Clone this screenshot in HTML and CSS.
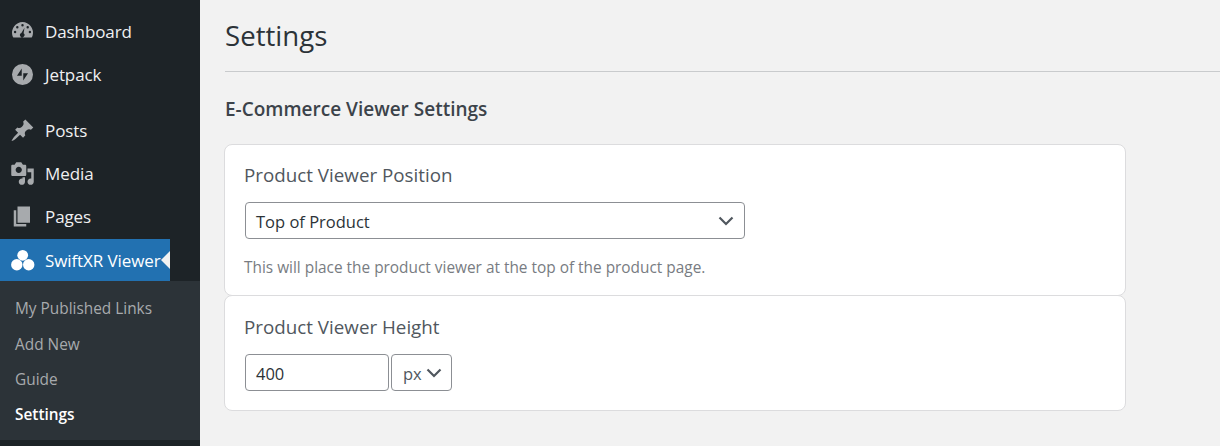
FILE: index.html
```html
<!DOCTYPE html>
<html lang="en">
<head>
<meta charset="utf-8">
<title>Settings</title>
<link rel="stylesheet" href="styles.css">
</head>
<body>
<div class="app">
  <nav class="sidebar">
    <ul class="menu menu-top">
      <li class="item"><svg class="icon" viewBox="-1.300 -1.300 22.600 22.600"><path fill="#a7aaad" fill-rule="evenodd" d="M10 1.500a9.500 9.500 0 0 1 9.200 11.800c-.2.800-.5 1.500-.9 2.200H1.700c-.4-.7-.7-1.400-.9-2.200A9.500 9.500 0 0 1 10 1.500zM10 3.200a1.100 1.100 0 1 0 0 2.200 1.100 1.100 0 0 0 0-2.200zM5.300 5a1.100 1.100 0 1 0 0 2.200 1.100 1.100 0 0 0 0-2.200zM14.700 5a1.100 1.100 0 1 0 0 2.200 1.100 1.100 0 0 0 0-2.200zM3.300 9.300a1.100 1.100 0 1 0 0 2.200 1.100 1.100 0 0 0 0-2.200zM16.700 9.300a1.100 1.100 0 1 0 0 2.200 1.100 1.100 0 0 0 0-2.200zM11.800 6.500 9 11.300a2 2 0 1 0 2 .3z"/></svg><span>Dashboard</span></li>
      <li class="item"><svg class="icon" viewBox="-1.300 -1.300 22.600 22.600"><path fill="#a7aaad" fill-rule="evenodd" d="M10 .5a9.500 9.500 0 1 1 0 19 9.500 9.500 0 0 1 0-19zM9.300 4.500 5 11.200h4.300zM10.700 8.800v6.700l4.300-6.700z"/></svg><span>Jetpack</span></li>
    </ul>
    <ul class="menu menu-mid">
      <li class="item"><svg class="icon" viewBox="0 0 20 20"><path fill="#a7aaad" d="M10.440 3.020l1.820-1.820 6.360 6.350-1.830 1.820c-1.050-.68-2.480-.57-3.410.36l-.75.750c-.92.930-1.040 2.350-.35 3.410l-1.830 1.820-2.410-2.410-2.800 2.790c-.42.420-3.380 2.710-3.800 2.290s1.860-3.390 2.280-3.810l2.790-2.790L4.100 9.360l1.830-1.820c1.050.69 2.480.57 3.400-.36l.75-.75c.93-.92 1.050-2.350.36-3.410z"/></svg><span>Posts</span></li>
      <li class="item"><svg class="icon" viewBox="0 0 20 20"><path fill="#a7aaad" fill-rule="evenodd" d="M13 11V4c0-.55-.45-1-1-1h-1.670L9 1H5L3.670 3H2c-.55 0-1 .45-1 1v7c0 .55.45 1 1 1h10c.55 0 1-.45 1-1zM7 4.500c1.380 0 2.500 1.120 2.500 2.500S8.380 9.500 7 9.500 4.500 8.380 4.500 7 5.620 4.500 7 4.500zM14 6h5v10.500c0 1.380-1.120 2.500-2.500 2.500S14 17.880 14 16.500s1.120-2.500 2.500-2.500c.17 0 .34.020.5.050V9h-3V6zm-4 8.050V13h2v3.500c0 1.380-1.120 2.500-2.500 2.500S7 17.880 7 16.500 8.120 14 9.500 14c.17 0 .34.020.5.050z"/></svg><span>Media</span></li>
      <li class="item"><svg class="icon" viewBox="0 0 20 20"><path fill="#a7aaad" d="M6 15V2h10v13H6zm-1 1h8v2H3V5h2v11z"/></svg><span>Pages</span></li>
      <li class="item item-active"><svg class="icon" viewBox="0 0 25 25"><g fill="#fff"><circle cx="12.700" cy="7.300" r="5.400"/><circle cx="6.800" cy="16.700" r="5.700"/><circle cx="18.700" cy="16.700" r="5.700"/></g></svg><span>SwiftXR Viewer</span><i class="notch"></i></li>
    </ul>
    <ul class="submenu">
      <li>My Published Links</li>
      <li>Add New</li>
      <li>Guide</li>
      <li class="current">Settings</li>
    </ul>
  </nav>
  <main class="content">
    <header class="page-head"><h1>Settings</h1></header>
    <h2>E-Commerce Viewer Settings</h2>
    <section class="card card-position">
      <h3>Product Viewer Position</h3>
      <div class="field select-wide"><span>Top of Product</span><svg class="chev" viewBox="0 0 16 10"><path d="M1.500 1.500 8 8l6.500-6.500"/></svg></div>
      <p class="hint">This will place the product viewer at the top of the product page.</p>
    </section>
    <section class="card card-height">
      <h3>Product Viewer Height</h3>
      <div class="row">
        <div class="field input-num"><span>400</span></div>
        <div class="field select-unit"><span>px</span><svg class="chev" viewBox="0 0 16 10"><path d="M1.500 1.500 8 8l6.500-6.500"/></svg></div>
      </div>
    </section>
  </main>
</div>
</body>
</html>
```
FILE: styles.css
```css
* { box-sizing: border-box; }
html, body { margin: 0; padding: 0; height: 100%; }
body { background: #f2f2f2; font-family: "Open Sans", "Noto Sans", sans-serif; overflow: hidden; }
ul { list-style: none; margin: 0; padding: 0; }

.app { display: flex; height: 446px; }

.sidebar { width: 200px; flex: none; background: #1d2327; color: #f0f0f1; padding-top: 10px; }
.menu-top { margin-bottom: 13px; }
.item { display: flex; align-items: center; width: 170px; height: 43px; padding-left: 10px; gap: 10px; font-size: 17px; position: relative; white-space: nowrap; letter-spacing: -0.1px; }
.icon { width: 25px; height: 25px; flex: none; }
.item-active { background: #2271b1; color: #fff; height: 42px; margin-top: 1px; }
.notch { position: absolute; right: 0; top: 12px; border: 9px solid transparent; border-right: 9px solid #f2f2f2; border-left: 0; }

.submenu { background: #2c3338; padding: 10.400px 0 8px 15px; height: 159px; color: #a7aaad; font-size: 15.400px; }
.submenu li { height: 35.300px; line-height: 36px; }
.submenu .current { color: #fff; font-weight: 600; }

.content { flex: 1; min-width: 0; padding-left: 25px; color: #3c434a; }
.page-head { height: 72px; border-bottom: 1px solid #c9cbcd; padding-top: 15px; }
h1 { margin: 0; font-size: 27.600px; font-weight: 400; line-height: 40px; color: #2c3338; }
h2 { margin: 25px 0 23px; font-size: 19px; line-height: 24px; font-weight: 600; color: #3c434a; }

.card { width: 902px; margin-left: -1px; background: #fff; border: 1px solid #dcdcde; border-radius: 8px; padding: 0 19px; }
.card-position { height: 152px; padding-top: 17px; }
.card-height { height: 116px; margin-top: -1px; padding-top: 18px; }
h3 { margin: 0 0 14px; font-size: 18.800px; font-weight: 400; line-height: 26px; color: #50575e; }

.field { height: 37px; border: 1px solid #8c8f94; border-radius: 4px; background: #fff; font-size: 16.500px; color: #2c3338; display: flex; align-items: center; }
.field span { padding-top: 2px; }
.select-wide { width: 500px; margin-left: 1px; padding: 0 10px; justify-content: space-between; }
.chev { width: 16px; height: 10px; flex: none; }
.chev path { fill: none; stroke: #50575e; stroke-width: 2.200; }
.hint { margin: 19px 0 0; font-size: 15.400px; line-height: 20px; color: #787c82; }

.row { display: flex; gap: 2px; margin-left: 1px; }
.input-num { width: 144px; padding: 0 10px; }
.select-unit { width: 61px; padding: 0 9px 0 11px; justify-content: space-between; color: #50575e; }
```
